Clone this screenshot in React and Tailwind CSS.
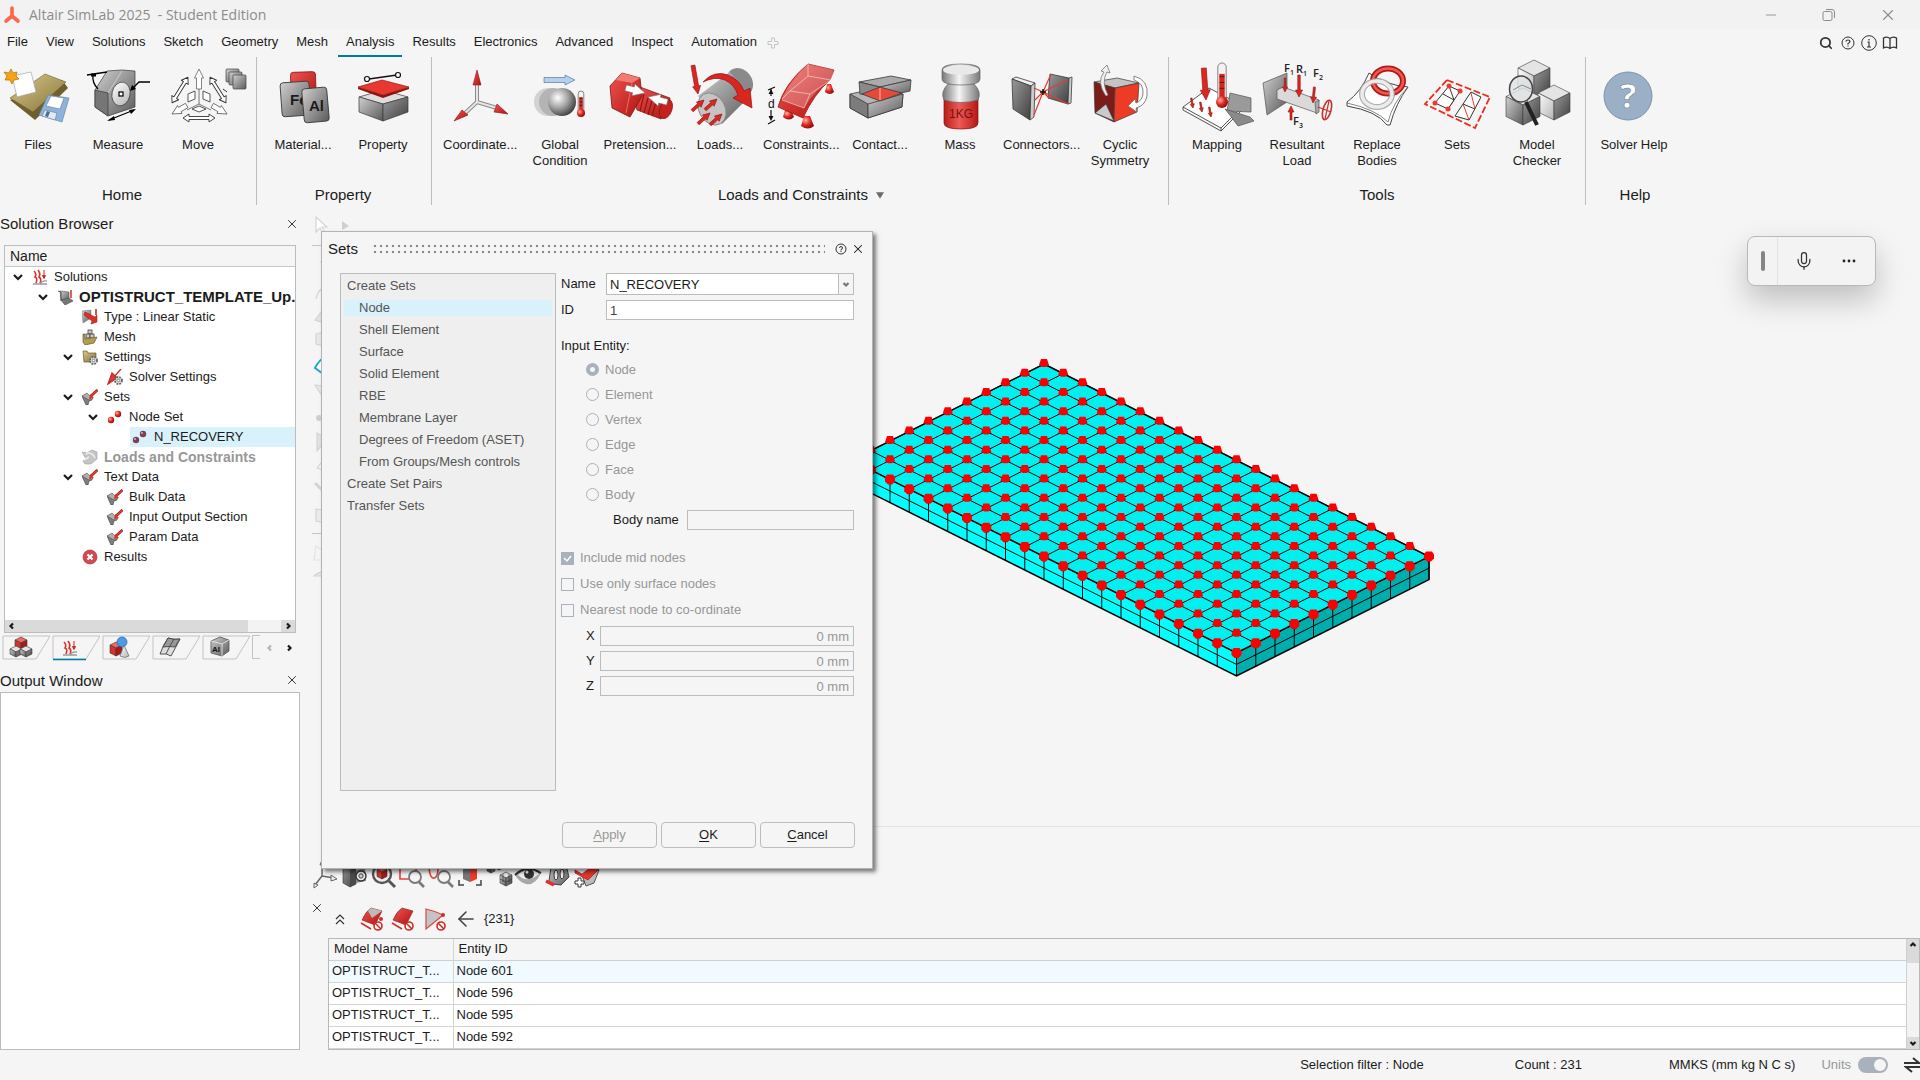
import React from "react";
import { X, Mic, Minus, BookOpen, Search, ArrowLeft } from "lucide-react";

const OUT = "#3a3a3a";

function Defs() {
  return (
    <svg className="absolute h-0 w-0" aria-hidden="true">
      <defs>
        <linearGradient id="gray" x1="0" y1="0" x2="1" y2="1">
          <stop offset="0" stopColor="#d0d0d0" />
          <stop offset="1" stopColor="#5a5a5a" />
        </linearGradient>
        <linearGradient id="light" x1="0" y1="0" x2="1" y2="1">
          <stop offset="0" stopColor="#ffffff" />
          <stop offset="1" stopColor="#b4b4b4" />
        </linearGradient>
        <linearGradient id="dark" x1="0" y1="0" x2="1" y2="1">
          <stop offset="0" stopColor="#9a9a9a" />
          <stop offset="1" stopColor="#404040" />
        </linearGradient>
        <linearGradient id="red" x1="0" y1="0" x2="1" y2="1">
          <stop offset="0" stopColor="#f05450" />
          <stop offset="1" stopColor="#b01410" />
        </linearGradient>
        <linearGradient id="bar" x1="0" y1="0" x2="1" y2="0">
          <stop offset="0" stopColor="#777" />
          <stop offset="0.45" stopColor="#f6f6f6" />
          <stop offset="1" stopColor="#777" />
        </linearGradient>
        <linearGradient id="redbar" x1="0" y1="0" x2="1" y2="0">
          <stop offset="0" stopColor="#b81d19" />
          <stop offset="0.45" stopColor="#ee5a56" />
          <stop offset="1" stopColor="#b51814" />
        </linearGradient>
        <linearGradient id="tan" x1="0" y1="0" x2="1" y2="1">
          <stop offset="0" stopColor="#d9c98d" />
          <stop offset="1" stopColor="#857237" />
        </linearGradient>
        <radialGradient id="ball" cx="0.35" cy="0.35" r="0.75">
          <stop offset="0" stopColor="#ffffff" />
          <stop offset="0.5" stopColor="#a0a0a0" />
          <stop offset="1" stopColor="#303030" />
        </radialGradient>
        <radialGradient id="redball" cx="0.35" cy="0.35" r="0.75">
          <stop offset="0" stopColor="#ffb0a8" />
          <stop offset="0.5" stopColor="#e0261f" />
          <stop offset="1" stopColor="#7c0b08" />
        </radialGradient>
      </defs>
    </svg>
  );
}

/* Isometric cube: x,y is the top vertex, s the half width, h the side height. */
function Cube({ x, y, s, h, top = "#e4e4e4", left = "url(#gray)", right = "url(#dark)" }) {
  const k = s / 2;
  return (
    <g stroke={OUT} strokeWidth="0.6" strokeLinejoin="round">
      <polygon points={`${x},${y} ${x + s},${y + k} ${x},${y + 2 * k} ${x - s},${y + k}`} fill={top} />
      <polygon points={`${x - s},${y + k} ${x},${y + 2 * k} ${x},${y + 2 * k + h} ${x - s},${y + k + h}`} fill={left} />
      <polygon points={`${x + s},${y + k} ${x},${y + 2 * k} ${x},${y + 2 * k + h} ${x + s},${y + k + h}`} fill={right} />
    </g>
  );
}

/* Solid arrow whose tip is at x,y and whose tail is l units back along angle a. */
function Arrow({ x, y, a, l = 14, w = 2, head = 3, fill = "#dc2620", stroke = "#8d1410" }) {
  const t = head * 2;
  return (
    <polygon
      transform={`translate(${x} ${y}) rotate(${a})`}
      points={`0,0 ${-t},${-head} ${-t},${-w / 2} ${-l},${-w / 2} ${-l},${w / 2} ${-t},${w / 2} ${-t},${head}`}
      fill={fill}
      stroke={stroke}
      strokeWidth="0.6"
      strokeLinejoin="round"
    />
  );
}

function DoubleArrow({ x, y, a, l }) {
  const h = l / 2;
  return (
    <polygon
      transform={`translate(${x} ${y}) rotate(${a})`}
      points={`${h},0 ${h - 6},-4 ${h - 6},-1.5 ${6 - h},-1.5 ${6 - h},-4 ${-h},0 ${6 - h},4 ${6 - h},1.5 ${h - 6},1.5 ${h - 6},4`}
      fill="#fff"
      stroke="#333"
      strokeWidth="0.9"
      strokeLinejoin="round"
    />
  );
}

function Thermo({ x, y1, y2, r = 3.5 }) {
  return (
    <g>
      <rect x={x - r * 0.7} y={y1} width={r * 1.4} height={y2 - y1} rx={r * 0.7} fill="#f2f2f2" stroke="#555" strokeWidth="0.7" />
      <rect x={x - r * 0.45} y={y1 + (y2 - y1) * 0.28} width={r * 0.9} height={(y2 - y1) * 0.7} fill="#d9231d" />
      <circle cx={x} cy={y2} r={r} fill="url(#redball)" />
      {[0.35, 0.5, 0.65].map((k) => (
        <path key={k} d={`M${x - r * 0.4} ${y1 + (y2 - y1) * k}h${r * 0.8}`} stroke="#222" strokeWidth="0.8" />
      ))}
    </g>
  );
}

const icons = {
  files: (
    <>
      <polygon points="8,40 33,60 66,28 60,20" fill="#6f5f2e" />
      <polygon points="43,14 64,22 31,52 8,38" fill="url(#tan)" stroke="#6d5f30" strokeWidth="0.6" />
      <g stroke="#5d7ba1" strokeWidth="0.6">
        <polygon points="46,35 67,38 60,62 37,55" fill="#8fb2da" />
        <polygon points="49,36 62,38 58,49 44,46" fill="#fff" />
        <polygon points="43,50 55,53 53,60 40,56" fill="#e3e9f0" />
      </g>
      <polygon points="45,51 48,52 46,57 43,56" fill="#4a6b96" />
      <polygon points="10,16 29,12 34,32 15,37" fill="#fff" stroke="#a5a5a5" strokeWidth="0.7" />
      <polygon points="9,9 11,13 15,12 14,16 17,19 12,20 10,24 8,20 3,20 5,16 2,12 7,13" fill="#f6a414" stroke="#b36f00" strokeWidth="0.7" />
    </>
  ),
  measure: (
    <>
      <g stroke={OUT} strokeWidth="0.7">
        <polygon points="25,11 40,10 53,11 53,47 26,56 13,47 13,30" fill="url(#gray)" />
        <polygon points="13,30 26,33 26,56 13,47" fill="#767676" />
        <path d="M26 33L40 11" fill="none" stroke="#ddd" />
        <ellipse cx="39" cy="34" rx="9" ry="12" fill="url(#light)" transform="rotate(12 39 34)" />
      </g>
      <rect x="37" y="32" width="4" height="4" fill="#fff" stroke="#000" strokeWidth="1.2" />
      <g stroke="#000" strokeWidth="1.3" fill="none">
        <path d="M5 15l20-3M11 15q-1 8 5 14M68 22H57l-7 7M27 60l25-10" />
        <path d="M9 15h5" strokeWidth="3" />
      </g>
      <path d="M48 31l2-6 4 4zM25 61l7-5 1 4zM54 49l-7 1 2 4z" fill="#000" />
    </>
  ),
  move: (
    <>
      <DoubleArrow x={18} y={30} a={-58} l={30} />
      <DoubleArrow x={56} y={30} a={58} l={30} />
      <DoubleArrow x={37} y={58} a={0} l={32} />
      <Arrow x={37} y={9} a={-90} l={20} w={5} head={4.5} fill="#fff" stroke="#333" />
      <Arrow x={10} y={54} a={150} l={17} w={5} head={4.5} fill="#fff" stroke="#333" />
      <Arrow x={65} y={54} a={30} l={17} w={5} head={4.5} fill="#fff" stroke="#333" />
      <g fill="#fff" stroke="#444" strokeWidth="0.9">
        <polygon points="26,34 33,31 33,39 26,42" />
        <polygon points="48,34 41,31 41,39 48,42" />
        <polygon points="37,46 44,49 37,52 30,49" />
      </g>
      <path d="M37 29v15l-12 6M37 44l12 6" stroke="#555" fill="none" strokeWidth="0.8" />
      <g stroke="#444" strokeWidth="0.7" fill="url(#gray)">
        <rect x="64" y="9" width="13" height="13" rx="1" />
        <rect x="67" y="12" width="13" height="13" rx="1" />
        <rect x="71" y="15" width="13" height="14" rx="1" />
      </g>
      <path d="M61 29l4 3" stroke="#333" />
    </>
  ),
  material: (
    <>
      <rect x="24" y="12" width="25" height="34" rx="3" fill="url(#red)" stroke="#7c1411" strokeWidth="0.8" transform="rotate(-2 36 30)" />
      <rect x="14" y="22" width="29" height="34" rx="3" fill="url(#gray)" stroke={OUT} strokeWidth="0.9" transform="rotate(-4 28 38)" />
      <text x="23" y="45" fontSize="15" fontWeight="700" fontFamily="Liberation Sans, sans-serif" fill="#1c1c1c">Fe</text>
      <rect x="36" y="28" width="25" height="34" rx="3" fill="url(#gray)" stroke={OUT} strokeWidth="0.9" transform="rotate(-5 48 45)" />
      <text x="42" y="51" fontSize="15" fontWeight="700" fontFamily="Liberation Sans, sans-serif" fill="#1c1c1c">Al</text>
    </>
  ),
  property: (
    <>
      <g stroke={OUT} strokeWidth="0.7" strokeLinejoin="round">
        <polygon points="12,37 36,30 61,37 36,44" fill="#dedede" />
        <polygon points="12,37 36,44 36,61 12,52" fill="url(#gray)" />
        <polygon points="61,37 36,44 36,61 61,52" fill="url(#dark)" />
      </g>
      <polygon points="11,27 36,35 62,27 62,29 36,38 11,29" fill="#8f1410" />
      <polygon points="11,27 35,20 62,27 36,35" fill="#e8382f" stroke="#9b1a15" strokeWidth="0.7" />
      <path d="M22 19l28-4" stroke="#111" strokeWidth="1.3" />
      <circle cx="20" cy="19" r="2.5" fill="#fff" stroke="#111" strokeWidth="1.2" />
      <circle cx="51" cy="15" r="2.5" fill="#fff" stroke="#111" strokeWidth="1.2" />
    </>
  ),
  coordinate: (
    <>
      <g stroke="#8a8a8a" strokeWidth="4">
        <path d="M33 42V25M33 42L18 56M33 42l20 6" />
      </g>
      <g stroke="#e6e6e6" strokeWidth="2">
        <path d="M33 42V25M33 42L18 56M33 42l20 6" />
      </g>
      <g fill="url(#red)" stroke="#8d1410" strokeWidth="0.6">
        <polygon points="33,10 37,25 29,25" />
        <polygon points="10,61 18,50 24,55" />
        <polygon points="64,54 50,52 53,44" />
      </g>
    </>
  ),
  global: (
    <>
      <Arrow x={51} y={20} a={0} l={31} w={5} head={5} fill="#b4d0ee" stroke="#44688f" />
      <circle cx="24" cy="42" r="14" fill="#d2d2d2" />
      <circle cx="29" cy="42" r="14" fill="#b4b4b4" />
      <circle cx="38" cy="42" r="14" fill="url(#ball)" />
      <Thermo x={57} y1={31} y2={53} r={4} />
    </>
  ),
  pretension: (
    <>
      <polygon points="27,27 36,27 66,38 65,52 57,59 33,50" fill="url(#red)" stroke="#7e1411" strokeWidth="0.7" />
      <g stroke="#8a1512" strokeWidth="1.1">
        <path d="M40 34l-4 17M44 38l-4 15M48 40l-4 15M52 42l-4 14" />
      </g>
      <ellipse cx="62" cy="49" rx="6" ry="10" transform="rotate(20 62 49)" fill="#c5221d" stroke="#7e1411" strokeWidth="0.6" />
      <polygon points="18,13 36,18 38,36 26,57 8,48 6,26" fill="url(#red)" stroke="#7e1411" strokeWidth="0.8" />
      <polygon points="18,13 36,18 28,23 12,20" fill="#f27b76" />
      <path d="M28 23l-6 30" stroke="#f27b76" strokeWidth="0.8" />
      <Arrow x={41} y={33} a={15} l={20} w={6} head={6} fill="#fff" stroke="#777" />
      <Arrow x={44} y={37} a={195} l={20} w={6} head={6} fill="#fff" stroke="#777" />
    </>
  ),
  loads: (
    <>
      <ellipse cx="56" cy="22" rx="12" ry="15" transform="rotate(-35 56 22)" fill="#8a8a8a" />
      <polygon points="14,36 46,12 66,36 38,64" fill="url(#gray)" />
      <ellipse cx="28" cy="49" rx="13" ry="17" transform="rotate(-30 28 49)" fill="#c4c4c4" stroke="#808080" strokeWidth="0.8" />
      <path d="M19 22Q30 10 44 15Q56 20 60 31L66 28L68 48L49 38L54 35Q50 24 41 20Q31 16 19 22z" fill="#d9261f" stroke="#8d1410" strokeWidth="0.7" />
      <Arrow x={14} y={34} a={80} l={29} w={4} head={4} />
      <Arrow x={20} y={40} a={-42} l={16} w={3} head={3.5} />
      <Arrow x={33} y={39} a={-42} l={16} w={3} head={3.5} />
      <Arrow x={26} y={53} a={-42} l={16} w={3} head={3.5} />
      <Arrow x={38} y={54} a={-42} l={16} w={3} head={3.5} />
    </>
  ),
  constraints: (
    <>
      <g fill="url(#redball)">
        <path d="M21 50h6l3 7q-5 5-11 0z" />
        <path d="M40 56h6l4 10q-6 5-13 0z" />
        <path d="M63 24h4l3 8q-4 4-9 0z" />
      </g>
      <path d="M14 47Q20 24 44 4l26 6-4 10Q50 34 39 58z" fill="url(#red)" stroke="#a01813" strokeWidth="0.8" />
      <path d="M18 38Q28 18 44 4l26 6-3 10Q52 28 40 48L18 40z" fill="#fff" fillOpacity="0.25" />
      <path d="M44 4v12l23 4M44 16L26 31l-8 8M26 31l20 3 21-14M46 34l-6 14-22-8" stroke="#fff" strokeOpacity="0.6" fill="none" strokeWidth="0.8" />
      <path d="M4 30l7-3M4 64l7-4M7 29v7M7 50v9" stroke="#111" strokeWidth="1.2" />
      <path d="M4.500 34l2.500-5 2.500 5zM4.500 56l2.500 5 2.500-5z" fill="#111" />
      <text x="4" y="48" fontSize="12" fontFamily="Liberation Sans, sans-serif" fill="#111">d</text>
    </>
  ),
  contact: (
    <>
      <g stroke={OUT} strokeWidth="0.8" strokeLinejoin="round">
        <polygon points="6,34 20,31 59,34 58,47 24,58 6,48" fill="#b5b5b5" />
        <polygon points="6,34 24,44 24,58 6,48" fill="#7c7c7c" />
        <polygon points="24,44 59,34 58,47 24,58" fill="url(#gray)" />
        <polygon points="15,22 47,16 67,20 36,27" fill="#aaaaaa" />
        <polygon points="15,22 36,27 36,36 16,34" fill="#8a8a8a" />
        <polygon points="36,27 67,20 66,31 44,36 36,34" fill="url(#gray)" />
        <polygon points="18,34 36,27 58,33 36,41" fill="#e34a38" />
      </g>
      <path d="M36 28v12" stroke="#ffb6a6" />
    </>
  ),
  mass: (
    <>
      <path d="M20 38h34v25q0 6-17 6t-17-6z" fill="url(#redbar)" stroke="#7e1411" strokeWidth="0.7" />
      <path d="M24 24h26q8 8 4 16-17 5-34 0-4-8 4-16z" fill="url(#bar)" stroke="#666" strokeWidth="0.7" />
      <path d="M18 10q0-6 19-6t19 6v9q0 6-19 6t-19-6z" fill="url(#bar)" stroke="#666" strokeWidth="0.7" />
      <ellipse cx="37" cy="10" rx="18" ry="5" fill="#e9e9e9" />
      <text x="25" y="58" fontSize="12" fontFamily="Liberation Sans, sans-serif" fill="#7b0f0c">1KG</text>
    </>
  ),
  connectors: (
    <>
      <g stroke={OUT} strokeWidth="0.8">
        <polygon points="8,19 12,17 31,23 27,26" fill="#eee" />
        <polygon points="8,19 27,26 26,60 9,49" fill="url(#dark)" />
        <polygon points="27,26 31,23 30,57 26,60" fill="#ccc" />
        <polygon points="46,14 65,18 64,44 44,38" fill="url(#dark)" />
        <polygon points="65,18 68,17 67,43 64,44" fill="#ccc" />
      </g>
      <path d="M30 28l9 4-9 23M31 40l8-8 8-18M39 32l24-12M39 32l6 6M39 32l25 12" stroke="#e8392f" strokeWidth="1.2" fill="none" />
      <path d="M36 32h6M39 29v6" stroke="#111" strokeWidth="1.5" />
    </>
  ),
  cyclic: (
    <>
      <g stroke={OUT} strokeWidth="0.7">
        <polygon points="10,22 33,18 55,23 31,28" fill="#c4c4c4" />
        <polygon points="10,22 31,28 30,62 11,53" fill="#7a1c18" />
        <polygon points="55,23 31,28 30,62 53,52" fill="#ee3b26" />
        <polygon points="11,53 22,44 30,61" fill="#c9c9c9" />
      </g>
      <path d="M22 36Q12 22 20 12l-3-1 6-6 3 8-3-1Q17 22 24 35z" fill="#efefef" stroke="#777" strokeWidth="0.8" />
      <path d="M50 16q15 4 13 20-2 10-11 12l1 4-9-6 7-7 1 4q6-2 7-9 1-11-9-14z" fill="#fff" stroke="#777" strokeWidth="0.9" />
    </>
  ),
  mapping: (
    <>
      <polygon points="2,47 28,28 62,46 40,68" fill="#fff" stroke="#444" strokeWidth="0.9" />
      <path d="M2 47v3l38 21v-3M40 71l22-22" fill="none" stroke="#444" strokeWidth="0.9" />
      <g stroke="#555" strokeWidth="0.7">
        <polygon points="49,33 70,38 70,52 46,51" fill="#9a9a9a" />
        <polygon points="44,49 69,57 73,61 57,66 48,54" fill="#8a8a8a" />
      </g>
      <Arrow x={25} y={40} a={86} l={32} w={5} head={5} />
      <Arrow x={12} y={48} a={80} l={10} w={1.5} head={2} />
      <Arrow x={21} y={52} a={80} l={10} w={1.5} head={2} />
      <Arrow x={30} y={57} a={80} l={10} w={1.5} head={2} />
      <Thermo x={41} y1={3} y2={42} r={6} />
    </>
  ),
  resultant: (
    <>
      <g stroke="#555" strokeWidth="0.7">
        <polygon points="2,23 26,13 26,42 6,55" fill="url(#gray)" />
        <polygon points="16,30 22,27 58,40 56,53 16,39" fill="#dadada" />
        <polygon points="54,42 58,40 58,52 55,54" fill="#a9a9a9" />
      </g>
      <Arrow x={24} y={32} a={90} l={14} w={1.5} head={2.5} />
      <Arrow x={38} y={37} a={90} l={22} w={2.5} head={3.5} />
      <Arrow x={52} y={43} a={95} l={16} w={2} head={3} />
      <Arrow x={30} y={46} a={-90} l={14} w={2} head={3} />
      <ellipse cx="66" cy="50" rx="4" ry="10" transform="rotate(15 66 50)" fill="none" stroke="#c8302b" strokeWidth="1.6" />
      <path d="M57 47l13 5M68 41l-4 18" stroke="#c8302b" strokeWidth="1.2" />
      <g fontFamily="Open Sans, sans-serif" fontSize="11" fontWeight="600" fill="#222">
        <text x="23" y="12">F<tspan fontSize="7" dy="3">1</tspan></text>
        <text x="35" y="13">R<tspan fontSize="7" dy="3">1</tspan></text>
        <text x="52" y="17">F<tspan fontSize="7" dy="3">2</tspan></text>
        <text x="32" y="65">F<tspan fontSize="7" dy="3">3</tspan></text>
      </g>
    </>
  ),
  replace: (
    <>
      <path d="M28 13q16 12 39 14-12 16-18 38l-3 0q-10-14-40-19l0-4q14-10 22-29z" fill="#fff" stroke="#444" strokeWidth="1" />
      <path d="M6 43q28 6 41 19 5-20 20-35" fill="none" stroke="#666" strokeWidth="0.8" />
      <ellipse cx="47" cy="21" rx="15" ry="12.500" fill="none" stroke="#b61a16" strokeWidth="6" />
      <ellipse cx="47" cy="21" rx="15" ry="12.500" fill="none" stroke="#ee5a54" strokeWidth="2.500" />
      <ellipse cx="36" cy="34" rx="15" ry="13" fill="none" stroke="#9c9c9c" strokeWidth="6" strokeOpacity="0.8" />
      <ellipse cx="36" cy="34" rx="15" ry="13" fill="none" stroke="#f3f3f3" strokeWidth="3.500" strokeOpacity="0.9" />
    </>
  ),
  sets: (
    <>
      <polygon points="26,20 69,37 54,68 4,44" fill="none" stroke="#ef2b20" strokeWidth="1.8" strokeDasharray="7 2.500" />
      <g fill="#fff" stroke="#333" strokeWidth="1">
        <polygon points="28,26 39,31 27,49 14,43" />
        <polygon points="50,32 60,37 48,60 34,56" />
        <path d="M22 34l11 6M28 26l5 14-6 9M42 44l12 5" />
      </g>
      <path d="M50 33l4 16M42 44l6 16" stroke="#e63a30" />
      <g fill="#ee3a2e">
        <circle cx="28" cy="26" r="2.500" />
        <circle cx="39" cy="31" r="2.500" />
        <circle cx="27" cy="49" r="2.500" />
        <circle cx="14" cy="43" r="2.500" />
      </g>
    </>
  ),
  checker: (
    <>
      <Cube x={33} y={0} s={16} h={20} left="url(#light)" />
      <Cube x={53} y={25} s={16} h={19} left="url(#light)" />
      <Cube x={22} y={28} s={17} h={20} left="url(#gray)" />
      <ellipse cx="20" cy="29" rx="11.500" ry="13" fill="#dfe3e5" fillOpacity="0.8" stroke="#444" strokeWidth="1.5" />
      <path d="M12 30l9-5 9 4" stroke="#888" fill="none" />
      <path d="M25 42l11 23" stroke="#222" strokeWidth="4" />
    </>
  ),
  help: (
    <>
      <circle cx="30" cy="36" r="24" fill="#9bb0c6" stroke="#7b94ae" strokeWidth="1" />
      <text x="30" y="48" textAnchor="middle" fontSize="34" fontWeight="700" fontFamily="Open Sans, sans-serif" fill="#fff" stroke="#5d7186" strokeWidth="0.5">?</text>
    </>
  ),
};

const groups = [
  { name: "Home", cls: "w-[257px]", row: "-ml-0.5", head: "pr-3", items: [["files", "Files"], ["measure", "Measure"], ["move", "Move"]] },
  { name: "Property", cls: "w-[175px]", row: "ml-1.5", head: "pr-0.5", items: [["material", "Material..."], ["property", "Property"]] },
  {
    name: "Loads and Constraints",
    cls: "w-[737px]",
    row: "ml-2",
    head: "pl-0.5",
    menu: true,
    items: [
      ["coordinate", "Coordinate..."], ["global", "Global Condition"], ["pretension", "Pretension..."],
      ["loads", "Loads..."], ["constraints", "Constraints..."], ["contact", "Contact..."],
      ["mass", "Mass"], ["connectors", "Connectors..."], ["cyclic", "Cyclic Symmetry"],
    ],
  },
  {
    name: "Tools",
    cls: "w-[417px]",
    row: "ml-2",
    items: [["mapping", "Mapping"], ["resultant", "Resultant Load"], ["replace", "Replace Bodies"], ["sets", "Sets"], ["checker", "Model Checker"]],
  },
  { name: "Help", cls: "w-[98px]", row: "ml-2", last: true, items: [["help", "Solver Help"]] },
];

function Ribbon() {
  return (
    <div className="flex h-[148px] shrink-0">
      {groups.map((g) => (
        <section key={g.name} aria-label={g.name} className={`flex shrink-0 flex-col ${g.cls} ${g.last ? "" : "border-r border-[#bdbdbd]"}`}>
          <div className={`flex flex-1 pt-[3px] ${g.row}`}>
            {g.items.map(([id, label]) => (
              <button key={id} type="button" className="flex w-20 shrink-0 flex-col items-center">
                <svg className="h-[72px] w-[72px] shrink-0 overflow-visible" viewBox="0 0 72 72" aria-hidden="true">{icons[id]}</svg>
                <span className="mt-[5px] w-[74px] text-center leading-4">{label}</span>
              </button>
            ))}
          </div>
          <h2 className={`flex h-5 items-center justify-center gap-2 text-[15px] ${g.head || ""}`}>
            {g.name}
            {g.menu && <svg className="h-[7px] w-2" viewBox="0 0 10 8" aria-hidden="true"><path d="M0 0h10L5 8z" fill="#6b6b6b" /></svg>}
          </h2>
        </section>
      ))}
    </div>
  );
}

function Chevron({ className = "", small = false }) {
  return (
    <svg className={`h-3 w-3 ${className}`} viewBox="0 0 12 12" aria-hidden="true">
      <path d={small ? "M3.500 5l2.500 2.500L8.500 5" : "M2 4l4 4 4-4"} fill="none" stroke="currentColor" strokeWidth="2.200" />
    </svg>
  );
}

const Flame = (
  <>
    <path d="M2 2q3 3 1 6 3 1 1 6M6 1q3 4 1 7 3 2 1 6" fill="none" stroke="#e2312a" strokeWidth="1.600" />
    <path d="M12 1v7M10.500 6.500l1.500 3 1.500-3z" stroke="#d02721" fill="#d02721" />
    <path d="M1 15h7q2-4 7-3M8 15h7" fill="none" stroke="#9a9a9a" strokeWidth="1.300" />
  </>
);
const Funnel = (
  <>
    <path d="M0 7l6 1 4 3-3 1-1 4-2 0z" fill="#7d7d7d" stroke="#444" strokeWidth="0.600" />
    <path d="M0 7l5-3 6 6-4 1z" fill="#b0b0b0" stroke="#555" strokeWidth="0.600" />
    <path d="M15.500 1L9 7" stroke="#8d1410" strokeWidth="2.600" />
    <path d="M15.500 1L9 7" stroke="#e2443d" strokeWidth="1.400" />
    <path d="M8 5l4 4-5 1z" fill="#d9332c" />
  </>
);
const Gear = (
  <>
    <circle cx="11.500" cy="11.500" r="3.500" fill="#ddd" stroke="#666" strokeWidth="1.800" strokeDasharray="1.800 1" />
    <circle cx="11.500" cy="11.500" r="1.300" fill="#fff" stroke="#666" strokeWidth="0.700" />
  </>
);
const treeIcons = {
  solutions: Flame,
  model: (
    <>
      <polygon points="3,2 12,3 12,12 4,11" fill="url(#gray)" stroke="#555" strokeWidth="0.600" />
      <polygon points="4,11 12,9 16,12 8,16" fill="#777" stroke="#444" strokeWidth="0.600" />
      <path d="M1 2l3 1v9" fill="none" stroke="#555" />
      <path d="M14 1v8" stroke="#d12b25" strokeWidth="1.500" />
    </>
  ),
  type: (
    <>
      <polygon points="0,2 9,1 9,9 1,14" fill="url(#gray)" stroke="#777" strokeWidth="0.500" />
      <polygon points="3,3 13,8 15,6 15,13 9,15 10,12 2,6" fill="#dc2f28" stroke="#8d1410" strokeWidth="0.500" />
      <path d="M14 0v6" stroke="#b9211c" strokeWidth="1.500" />
    </>
  ),
  mesh: (
    <>
      <g fill="#c9c9c9" stroke="#444" strokeWidth="0.800">
        <rect x="6" y="1" width="4" height="4" />
        <rect x="4" y="5" width="4" height="4" />
        <rect x="8" y="5" width="4" height="4" />
      </g>
      <path d="M1 5l2 0v5l12-2-3 6-9 2-2-3z" fill="#b49c54" stroke="#6b5a25" strokeWidth="0.700" />
    </>
  ),
  settings: (
    <>
      <path d="M1 2h4l1 2h8v9H2z" fill="url(#tan)" stroke="#6b5a25" strokeWidth="0.700" />
      {Gear}
    </>
  ),
  solver: (
    <>
      <path d="M14 0L7 8M5 4l5 5-9 6z" stroke="#c92a24" fill="#dd3b34" strokeWidth="1.300" />
      {Gear}
    </>
  ),
  funnel: Funnel,
  nodes: (
    <>
      <circle cx="11" cy="5" r="3.200" fill="url(#redball)" />
      <circle cx="4" cy="11" r="3.200" fill="url(#redball)" />
    </>
  ),
  nodesel: (
    <>
      <circle cx="11" cy="5" r="3.200" fill="#7d3f58" />
      <circle cx="4" cy="11" r="3.200" fill="#7d3f58" />
      <circle cx="10" cy="4" r="1" fill="#d5b5c5" />
      <circle cx="3" cy="10" r="1" fill="#d5b5c5" />
    </>
  ),
  loads: (
    <>
      <path d="M0 3l5 1 5-3 5 2v7l-6 5-6 0-2-3 3-2z" fill="#c4c4c4" stroke="#a9a9a9" strokeWidth="0.700" />
      <path d="M4 5q6-3 9 4M2 11l5-3" fill="none" stroke="#eee" strokeWidth="1.500" />
    </>
  ),
  results: (
    <>
      <circle cx="8" cy="8" r="7" fill="#d04a50" stroke="#a8353b" strokeWidth="0.700" />
      <path d="M5.500 5.500l5 5M10.500 5.500l-5 5" stroke="#fff" strokeWidth="2.200" />
    </>
  ),
};

const tree = [
  { pad: "pl-[7px]", open: true, icon: "solutions", label: "Solutions" },
  { pad: "pl-8", open: true, icon: "model", label: "OPTISTRUCT_TEMPLATE_Up.", cls: "text-[15px] font-bold" },
  { pad: "pl-[57px]", icon: "type", label: "Type : Linear Static" },
  { pad: "pl-[57px]", icon: "mesh", label: "Mesh" },
  { pad: "pl-[57px]", open: true, icon: "settings", label: "Settings" },
  { pad: "pl-[82px]", icon: "solver", label: "Solver Settings" },
  { pad: "pl-[57px]", open: true, icon: "funnel", label: "Sets" },
  { pad: "pl-[82px]", open: true, icon: "nodes", label: "Node Set" },
  { pad: "pl-[107px]", icon: "nodesel", label: "N_RECOVERY", sel: true },
  { pad: "pl-[57px]", icon: "loads", label: "Loads and Constraints", cls: "text-[14px] font-bold text-[#979797]" },
  { pad: "pl-[57px]", open: true, icon: "funnel", label: "Text Data" },
  { pad: "pl-[82px]", icon: "funnel", label: "Bulk Data" },
  { pad: "pl-[82px]", icon: "funnel", label: "Input Output Section" },
  { pad: "pl-[82px]", icon: "funnel", label: "Param Data" },
  { pad: "pl-[57px]", icon: "results", label: "Results" },
];

const tabIcons = [
  <g key="a">
    <Cube x={12} y={1} s={6} h={6} top="#f06a64" left="#d8302a" right="#a81a15" />
    <Cube x={7} y={10} s={6} h={5} />
    <Cube x={17} y={10} s={6} h={5} />
  </g>,
  <g key="b" transform="translate(3 4)">{Flame}</g>,
  <g key="c">
    <Cube x={7} y={6} s={6} h={8} top="#f06a64" left="#d8302a" right="#a81a15" />
    <circle cx="13" cy="6" r="5" fill="#4a9be8" stroke="#2463a5" strokeWidth="0.700" />
    <path d="M15 9l5 11q-4 3-9 0z" fill="url(#light)" stroke="#666" strokeWidth="0.700" />
  </g>,
  <g key="d" fill="#ddd" stroke="#444" strokeWidth="0.900">
    <path d="M9 2q6 2 12 1Q17 11 12 20 8 17 1 18 4 9 9 2z" />
    <path d="M9 2q6 2 12 1-3 4-5 8-6-1-12 0z" fill="#999" />
    <path d="M15 3q-5 8-8 15" fill="none" />
  </g>,
  <g key="e">
    <polygon points="2,5 11,1 20,4 20,15 13,20 2,17" fill="url(#gray)" stroke="#555" strokeWidth="0.800" />
    <path d="M2 5l11 3 7-4M13 8v12" fill="none" stroke="#eee" strokeWidth="0.800" />
    <text x="3" y="16" fontSize="8" fontWeight="700" fontFamily="Liberation Sans, sans-serif" fill="#111">Al</text>
  </g>,
];

function Sidebar() {
  return (
    <aside className="flex w-[300px] shrink-0 flex-col">
      <header className="flex h-10 shrink-0 items-center justify-between pb-0.5 pr-px">
        <h2 className="text-[15px]">Solution Browser</h2>
        <button type="button" aria-label="Close Solution Browser"><X className="h-3.5 w-3.5" strokeWidth={1.5} /></button>
      </header>
      <div className="mx-1 flex h-[388px] shrink-0 flex-col border border-[#bcbcbc] bg-white">
        <div className="flex h-[21px] shrink-0 items-center border-b border-[#c8c8c8] bg-[#f5f5f5] pl-[5px] text-[14px]">Name</div>
        <ul className="flex-1 overflow-hidden">
          {tree.map((r, i) => (
            <li key={i} className={`flex h-5 items-center whitespace-nowrap ${r.pad}`}>
              {r.open ? (
                <button type="button" aria-label={`Collapse ${r.label}`} className="mr-3 h-3 w-3"><Chevron className="block" /></button>
              ) : (
                <span className="w-6 shrink-0" />
              )}
              <span className={`-ml-1.5 flex h-5 min-w-0 grow items-center gap-1.5 pl-0.5 ${r.sel ? "bg-[#d8f1fb]" : ""}`}>
                <svg className="h-4 w-4 shrink-0" viewBox="0 0 16 16" aria-hidden="true">{treeIcons[r.icon]}</svg>
                <span className={r.cls}>{r.label}</span>
              </span>
            </li>
          ))}
        </ul>
        <div className="flex h-3 shrink-0 items-center bg-[#f3f3f3]">
          <button type="button" aria-label="Scroll left" className="flex h-3 w-3.5 items-center justify-center bg-[#dadada]"><Chevron small className="rotate-90" /></button>
          <div className="h-3 w-[229px] bg-[#dadada]" />
          <div className="grow" />
          <button type="button" aria-label="Scroll right" className="flex h-3 w-3.5 items-center justify-center bg-[#dadada]"><Chevron small className="-rotate-90" /></button>
        </div>
      </div>
      <div className="mt-0.5 flex h-[26px] shrink-0 pl-0.5" role="tablist">
        {tabIcons.map((ic, i) => (
          <button key={i} type="button" role="tab" aria-selected={i === 1} aria-label={`Browser tab ${i + 1}`} className="h-[26px] w-[50px] shrink-0">
            <svg className="h-[26px] w-[50px] overflow-visible" viewBox="0 0 50 26">
              <path d="M48 1H1v23h33L48 1" fill="none" stroke="#c3c3c3" />
              {i === 1 && <path d="M1 24.500h33" stroke="#007aa3" strokeWidth="1.500" />}
              <g transform="translate(7 1)">{ic}</g>
            </svg>
          </button>
        ))}
        <span className="h-6 w-2 border-b border-l border-t border-[#c3c3c3]" />
        <button type="button" aria-label="Previous tabs" className="ml-1 text-[#b5b5b5]"><Chevron small className="rotate-90" /></button>
        <button type="button" aria-label="Next tabs" className="ml-[7px]"><Chevron small className="-rotate-90" /></button>
      </div>
      <header className="flex h-[31px] shrink-0 items-end justify-between pb-[3px] pr-px">
        <h2 className="text-[15px] leading-4">Output Window</h2>
        <button type="button" aria-label="Close Output Window" className="pb-0.5"><X className="h-3.5 w-3.5" strokeWidth={1.5} /></button>
      </header>
      <div className="grow border border-[#bcbcbc] bg-white" />
    </aside>
  );
}

/* Plate of 20 x 10 elements, two layers thick, in an isometric view. */
function Model() {
  const P = (i, j) => [1044 + 19.25 * (i - j), 364 + 9.63 * (i + j)];
  const H = 23;
  const str = (pts) => pts.map((p) => p.join(",")).join(" ");
  const dn = ([x, y], d) => [x, y + d];
  const A = P(0, 0), B = P(20, 0), C = P(20, 10), D = P(0, 10);
  const line = (a, b, key, w = 1) => <path key={key} d={`M${a[0]} ${a[1]}L${b[0]} ${b[1]}`} strokeWidth={w} />;
  const grid = [];
  for (let i = 0; i <= 20; i++) {
    grid.push(line(P(i, 0), P(i, 10), `a${i}`));
    grid.push(line(P(i, 10), dn(P(i, 10), H), `b${i}`));
  }
  for (let j = 0; j <= 10; j++) {
    grid.push(line(P(0, j), P(20, j), `c${j}`));
    grid.push(line(P(20, j), dn(P(20, j), H), `d${j}`));
  }
  const nodes = [];
  for (let i = 0; i <= 20; i++) {
    for (let j = 0; j <= 10; j++) {
      const [x, y] = P(i, j);
      const front = i === 20 || j === 10;
      const pts = front ? "-5,-2 -3,-5 3,-5 5,-2 5,2 2,5 -2,5 -5,2" : "-5,1 -3,-5 3,-5 5,1 2,3 -2,3";
      nodes.push(<polygon key={`${i}-${j}`} transform={`translate(${x} ${y})`} points={pts} />);
    }
  }
  return (
    <svg className="absolute left-[540px] top-[145px] h-[340px] w-[610px]" viewBox="840 350 610 340" role="img" aria-label="Finite element model">
      <polygon points={str([A, B, C, D])} fill="#00efef" />
      <polygon points={str([D, C, dn(C, H), dn(D, H)])} fill="#00ffff" />
      <polygon points={str([B, C, dn(C, H), dn(B, H)])} fill="#00adad" />
      <g stroke="#000" fill="none">
        {grid}
        {line(dn(D, H / 2), dn(C, H / 2), "m1")}
        {line(dn(B, H / 2), dn(C, H / 2), "m2")}
        <polygon points={str([A, B, C, D])} strokeWidth="1.500" />
        <polyline points={str([D, dn(D, H), dn(C, H), dn(B, H), B])} strokeWidth="1.500" />
      </g>
      <g fill="#fb0000">{nodes}</g>
    </svg>
  );
}

function Rail() {
  const g = { fill: "none", stroke: "#d4d4d4", strokeWidth: 1.2 };
  const shapes = [
    <path key="0" d="M12 8q8 0 12 8" {...g} />,
    <path key="1" d="M8 20q2-12 16-16" {...g} />,
    <path key="2" d="M7 16L16 4l8 4-6 12z" {...g} fill="#e2e2e2" />,
    <path key="3" d="M8 5l10-3v16l-10-3z" {...g} fill="#e8e8e8" />,
    <path key="4" d="M7 14Q11 6 18 2l8 6-8 14z" fill="#fff" stroke="#1aa5d8" strokeWidth="2" />,
    <path key="5" d="M7 6l16 2-7 12z" {...g} fill="#e8e8e8" />,
    <circle key="6" cx="11" cy="14" r="3" fill="#cfcfcf" />,
    <path key="7" d="M9 4l10 6-10 12z" {...g} fill="#e2e2e2" />,
    <path key="8" d="M9 14l8-10 6 14z" {...g} />,
    <path key="9" d="M7 4l14 14" {...g} strokeWidth="3" />,
    <path key="10" d="M8 5l14 2v13l-14-3z" {...g} fill="#ececec" />,
  ];
  return (
    <div className="flex w-[34px] flex-col pl-1 text-[#cfcfcf]" aria-hidden="true">
      <svg className="mt-2 h-6 w-12" viewBox="0 0 48 24">
        <path d="M12 4v15l4-4 3 6 2-1-3-6h5z" {...g} fill="#fff" />
        <path d="M38 8l7 5-7 4z" fill="#cfcfcf" />
      </svg>
      <div className="my-2 ml-2 border-t border-[#c5c5c5]" />
      {shapes.map((s, i) => (
        <svg key={i} className="mb-0.5 ml-1 h-[23px] w-[26px]" viewBox="0 0 26 23">{s}</svg>
      ))}
      <div className="mb-2 mt-1 ml-2 border-t border-[#c5c5c5]" />
      <svg className="ml-1 h-6 w-[26px]" viewBox="0 0 26 24"><path d="M8 4l6 4 8-2-2 12H6z" {...g} strokeOpacity="0.5" /></svg>
      <svg className="ml-1 h-6 w-[26px]" viewBox="0 0 26 24"><path d="M6 10q8-8 16 0z" {...g} fill="#e6e6e6" /></svg>
    </div>
  );
}

const Lens = <g><circle cx="17" cy="16" r="6" fill="#f5f5f5" stroke="#7a7a7a" strokeWidth="1.800" /><path d="M21 21l5 5" stroke="#7a7a7a" strokeWidth="2.600" /></g>;
const navIcons = [
  ["Triad", <g key="a" stroke="#666" fill="none"><path d="M11 15V2M11 15l-7 9M11 15l12 2" strokeWidth="1.500" /><path d="M3 22l0 5 4-3zM20 14l6 4-6 2zM9 4l2-5 2 5z" fill="#eee" /></g>],
  ["Camera", <g key="b"><polygon points="3,7 11,4 16,7 16,23 10,26 3,22" fill="url(#dark)" stroke="#333" strokeWidth="0.600" /><polygon points="10,9 16,7 16,23 10,26" fill="#4a4a4a" /><polygon points="16,9 25,7 26,20 16,22" fill="#8a8a8a" /><circle cx="21" cy="15" r="5" fill="#eee" stroke="#333" strokeWidth="1.400" /><circle cx="21" cy="15" r="2.200" fill="#ccc" stroke="#444" /></g>],
  ["Zoom to part", <g key="c"><circle cx="13" cy="13" r="9" fill="#eee" stroke="#555" strokeWidth="2.400" /><Cube x={13} y={6} s={5} h={7} top="#f06a64" left="#d8302a" right="#a81a15" /><path d="M20 20l6 6" stroke="#555" strokeWidth="3" /></g>],
  ["Zoom window", <g key="d"><path d="M2 2v16h16V2z" fill="none" stroke="#e3403a" strokeWidth="1.600" />{Lens}</g>],
  ["Zoom lasso", <g key="e"><path d="M2 2q0 14 4 15t5-8 10-4" fill="none" stroke="#e3403a" strokeWidth="1.600" />{Lens}</g>],
  ["Fit", <g key="f"><polygon points="7,5 14,8 14,21 7,18" fill="#777" /><polygon points="14,8 21,4 21,18 14,21" fill="#ec3a2c" /><path d="M3 19v5h5M25 19v5h-5" fill="none" stroke="#444" strokeWidth="1.500" /></g>],
  ["Explode", <g key="g"><Cube x={6} y={4} s={4} h={4} left="#555" /><Cube x={14} y={1} s={4} h={4} left="#555" /><Cube x={21} y={11} s={6} h={8} /><path d="M18 13v8M24 13v8M15 18l6 3 6-3" stroke="#333" fill="none" strokeWidth="0.700" /></g>],
  ["Show", <g key="h"><path d="M1 14Q12 0 27 12q-6 13-15 11Q5 21 1 14z" fill="#a8a8a8" /><path d="M1 14Q12 3 27 12" fill="none" stroke="#333" strokeWidth="2" /><path d="M4 14q9 9 21-1-10-9-21 1z" fill="#eee" /><circle cx="15" cy="13" r="5" fill="#333" /><circle cx="13" cy="11" r="1.500" fill="#fff" /></g>],
  ["Section", <g key="i"><path d="M8 6q8-4 16 2l2 8-8 8-9-1-3-3z" fill="url(#gray)" stroke="#444" /><ellipse cx="13" cy="14" rx="2" ry="5" fill="#eee" stroke="#333" /><ellipse cx="19" cy="13" rx="2" ry="5" fill="#eee" stroke="#333" /><path d="M3 20l8 4" stroke="#e3312a" strokeWidth="3.500" /></g>],
  ["Add plane", <g key="j"><polygon points="10,14 27,9 22,22 14,25" fill="#bbb" stroke="#555" /><polygon points="3,9 10,13 22,4 27,8 16,19 3,12" fill="#e8362e" stroke="#8d1410" strokeWidth="0.600" /><path d="M6 17h3v3h3v3h-3v3H6v-3H3v-3h3z" fill="#fff" stroke="#333" /></g>],
];

const NoSign = <g stroke="#d32a24" fill="#fff" strokeWidth="1.600"><circle cx="18" cy="19" r="4" /><path d="M15 16l6 6" /></g>;

const listItems = [
  ["Create Sets"], ["Node", 1, 1], ["Shell Element", 1], ["Surface", 1], ["Solid Element", 1], ["RBE", 1],
  ["Membrane Layer", 1], ["Degrees of Freedom (ASET)", 1], ["From Groups/Mesh controls", 1], ["Create Set Pairs"], ["Transfer Sets"],
];

function SetsDialog() {
  return (
    <div role="dialog" aria-label="Sets" className="absolute left-[21px] top-[26px] w-[552px] border border-[#b3b3b3] bg-[#f5f5f5] pb-5 shadow-[3px_3px_4px_rgba(0,0,0,0.5)]">
      <header className="flex h-[41px] items-center pb-[7px] pl-1.5 pr-[7px]">
        <h2 className="w-[44px] text-[15px]">Sets</h2>
        <div className="mr-2.5 h-3 grow bg-[radial-gradient(circle,#8a8a8a_1.200px,transparent_1.600px)] bg-size-[6px_6px]" />
        <button type="button" aria-label="Help" className="mr-1">
          <svg className="h-3 w-3" viewBox="0 0 12 12"><circle cx="6" cy="6" r="5" fill="none" stroke="#333" /><path d="M4.500 5Q4.500 3.500 6 3.500T7.500 5Q7.500 6 6 6.500V7.500M6 8v1" fill="none" stroke="#333" /></svg>
        </button>
        <button type="button" aria-label="Close"><X className="h-3.5 w-3.5" strokeWidth={1.8} /></button>
      </header>
      <div className="flex gap-[5px] pl-[18px] pr-[18px]">
        <ul className="h-[518px] w-[216px] border border-[#bcbcbc] bg-[#efefef] px-[3px] pt-px text-[#555]">
          {listItems.map(([t, sub, sel]) => (
            <li key={t} className={`flex h-[22px] items-center ${sel ? "" : sub ? "pl-[15px]" : "pl-[3px]"}`}>
              <button type="button" className={`text-left ${sel ? "h-4 w-full bg-[#d8f1fb] pl-[15px] leading-4" : ""}`}>{t}</button>
            </li>
          ))}
        </ul>
        <form className="flex grow flex-col" onSubmit={(e) => e.preventDefault()}>
          <div className="flex h-[22px] items-center">
            <label htmlFor="set-name" className="w-[45px]">Name</label>
            <input id="set-name" defaultValue="N_RECOVERY" className="h-[22px] min-w-0 grow border border-[#bcbcbc] bg-white px-[3px] outline-none" />
            <button type="button" aria-label="Choose a name" className="-ml-px flex h-[22px] w-4 items-center justify-center border border-[#bcbcbc] text-[#777]">
              <Chevron small />
            </button>
          </div>
          <div className="mt-[5px] flex h-5 items-center">
            <label htmlFor="set-id" className="w-[45px]">ID</label>
            <input id="set-id" defaultValue="1" className="h-5 min-w-0 grow border border-[#bcbcbc] bg-white px-[3px] text-[#444] outline-none" />
          </div>
          <fieldset className="mt-4">
            <legend className="h-[21px] leading-5">Input Entity:</legend>
            {["Node", "Element", "Vertex", "Edge", "Face", "Body"].map((t, i) => (
              <label key={t} className="flex h-[25px] items-center gap-1.5 pl-[25px] text-[#979797]">
                <input
                  type="radio" name="entity" disabled defaultChecked={i === 0}
                  className="h-[13px] w-[13px] appearance-none rounded-full border border-[#a9b1bd] checked:border-[4px]"
                />
                {t}
              </label>
            ))}
          </fieldset>
          <div className="mt-[3px] flex h-5 items-center gap-1.5 pl-[52px]">
            <label htmlFor="body-name" className="grow whitespace-nowrap">Body name</label>
            <input id="body-name" disabled className="h-5 w-[167px] shrink-0 border border-[#bcbcbc]" />
          </div>
          <div className="mb-[3px] mt-[15px]">
            {["Include mid nodes", "Use only surface nodes", "Nearest node to co-ordinate"].map((t, i) => (
              <label key={t} className="relative flex h-[26px] items-center gap-1.5 text-[#979797]">
                <input type="checkbox" disabled defaultChecked={i === 0} className="h-[13px] w-[13px] appearance-none border border-[#a9b1bd] checked:bg-[#a9b1bd]" />
                {i === 0 && (
                  <svg className="pointer-events-none absolute left-0 h-[13px] w-[13px]" viewBox="0 0 13 13" aria-hidden="true">
                    <path d="M3 6l3 3 4-5" fill="none" stroke="#fff" strokeWidth="1.500" />
                  </svg>
                )}
                {t}
              </label>
            ))}
          </div>
          {["X", "Y", "Z"].map((t) => (
            <div key={t} className="mb-[5px] flex h-5 items-center pl-[25px]">
              <label htmlFor={`coord-${t}`} className="w-3.5">{t}</label>
              <input id={`coord-${t}`} disabled defaultValue="0 mm" className="h-5 min-w-0 grow border border-[#bcbcbc] px-1 text-right text-[#979797]" />
            </div>
          ))}
        </form>
      </div>
      <div className="mt-[31px] flex justify-end gap-1 pr-[17px]">
        {["Apply", "OK", "Cancel"].map((t, i) => (
          <button key={t} type="button" disabled={i === 0} className="h-[26px] w-[95px] rounded-sm border border-[#bcbcbc] disabled:text-[#979797]">
            <span className="underline underline-offset-2">{t[0]}</span>{t.slice(1)}
          </button>
        ))}
      </div>
    </div>
  );
}

function EntityPanel() {
  return (
    <div className="h-[157px] shrink-0 pl-[10px]">
      <div className="flex h-[45px]">
        <button type="button" aria-label="Close entity list" className="mt-2 h-3.5 w-3.5"><X className="h-3.5 w-3.5" strokeWidth={1.5} /></button>
        <div className="mt-3 flex h-7 items-center">
          <button type="button" aria-label="Collapse" className="ml-2.5">
            <svg className="h-3 w-3" viewBox="0 0 12 12"><path d="M2 6l4-4 4 4M2 11l4-4 4 4" fill="none" stroke="#333" strokeWidth="1.200" /></svg>
          </button>
          <button type="button" aria-label="Remove linked faces" className="ml-3.5">
            <svg className="h-6 w-6" viewBox="0 0 24 24"><path d="M2 13Q6 4 11 1l11 3-7 14z" fill="url(#red)" stroke="#8d1410" strokeWidth="0.600" /><path d="M8 4l3-3 11 3-10 7z" fill="#bbb" /><path d="M1 16l10 6" stroke="#d32a24" strokeWidth="1.500" /><circle cx="21" cy="12" r="2" fill="#d32a24" />{NoSign}</svg>
          </button>
          <button type="button" aria-label="Remove face" className="ml-[7px]">
            <svg className="h-6 w-6" viewBox="0 0 24 24"><path d="M2 13Q6 4 11 1l11 3-7 14z" fill="url(#red)" stroke="#8d1410" strokeWidth="0.600" /><path d="M1 16l10 6" stroke="#d32a24" strokeWidth="1.500" />{NoSign}</svg>
          </button>
          <button type="button" aria-label="Remove edge" className="ml-2">
            <svg className="h-6 w-6" viewBox="0 0 24 24"><path d="M3 2q9 2 17 6L3 22z" fill="#c4c4c4" stroke="#e0443e" strokeWidth="1.200" /><circle cx="20" cy="8" r="2" fill="#d32a24" />{NoSign}</svg>
          </button>
          <button type="button" aria-label="Back" className="ml-[7px]"><ArrowLeft className="h-6 w-6 text-[#444]" strokeWidth={1.6} /></button>
          <span className="ml-1.5">{"{231}"}</span>
        </div>
      </div>
      <div className="ml-[18px] flex h-[112px] border border-[#b8b8b8] bg-white">
        <table className="grow table-fixed border-collapse self-start text-left">
          <colgroup><col className="w-[124px]" /><col /></colgroup>
          <thead>
            <tr className="h-[21px] border-b border-[#cfcfcf] bg-[#f5f5f5]">
              <th className="border-r border-[#d4d4d4] p-0 pl-[5px] font-normal">Model Name</th>
              <th className="p-0 pl-[5px] font-normal">Entity ID</th>
            </tr>
          </thead>
          <tbody>
            {[601, 596, 595, 592].map((n, i) => (
              <tr key={n} className={`h-[22px] border-b border-[#d4d4d4] ${i === 0 ? "bg-[#f1fbff]" : ""}`}>
                <td className="border-r border-[#d4d4d4] p-0 pl-[3px] leading-4">OPTISTRUCT_T...</td>
                <td className="p-0 pl-[3px] leading-4">Node {n}</td>
              </tr>
            ))}
          </tbody>
        </table>
        <div className="flex w-[13px] shrink-0 flex-col border-l border-[#cfcfcf] bg-[#f3f3f3]">
          <button type="button" aria-label="Scroll up" className="flex h-3 items-center justify-center bg-[#dadada]"><Chevron small className="rotate-180" /></button>
          <div className="h-3 bg-[#dadada]" />
          <div className="grow" />
          <button type="button" aria-label="Scroll down" className="flex h-3 items-center justify-center bg-[#dadada]"><Chevron small /></button>
        </div>
      </div>
    </div>
  );
}

const menu = ["File", "View", "Solutions", "Sketch", "Geometry", "Mesh", "Analysis", "Results", "Electronics", "Advanced", "Inspect", "Automation"];

export default function App() {
  return (
    <div className="flex min-h-screen flex-col overflow-hidden bg-[#f5f5f5] font-['Liberation_Sans',Arial,sans-serif] text-[13px] leading-4 text-[#1b1b1b]">
      <Defs />
      <header className="flex h-[29px] shrink-0 items-center bg-[#f2f2f2] pl-[3px]">
        <svg className="h-[18px] w-[18px]" viewBox="0 0 18 18" aria-hidden="true">
          <path d="M9 2v8M9 10l-6 5M9 10l6 5" fill="none" stroke="#f9684a" strokeWidth="3.600" strokeLinecap="round" strokeLinejoin="round" />
        </svg>
        <h1 className="grow whitespace-pre pl-2 font-['Open_Sans',sans-serif] text-[14px] text-[#8c8c8c]">{"Altair SimLab 2025  - Student Edition"}</h1>
        <div className="flex items-center gap-[43px] pr-[23px] text-[#8c8c8c]">
          <button type="button" aria-label="Minimize"><Minus className="h-4 w-4" strokeWidth={1.3} /></button>
          <button type="button" aria-label="Restore">
            <svg className="h-3.5 w-3.5" viewBox="0 0 14 14"><rect x="1" y="3.500" width="9" height="9" rx="1.500" fill="none" stroke="currentColor" /><path d="M4 1.500h6q2.500 0 2.500 2.500v6" fill="none" stroke="currentColor" /></svg>
          </button>
          <button type="button" aria-label="Close window"><X className="h-[18px] w-[18px]" strokeWidth={1.5} /></button>
        </div>
      </header>
      <nav className="-ml-px flex h-7 shrink-0 items-stretch gap-0.5">
        {menu.map((m) => (
          <button key={m} type="button" className={`border-b-2 px-2 pb-0.5 pt-0.5 ${m === "Analysis" ? "border-[#007aa3]" : "border-transparent"}`}>{m}</button>
        ))}
        <button type="button" aria-label="Add tab">
          <svg className="h-3 w-3" viewBox="0 0 12 12"><path d="M4.500 1h3v3.500H11v3H7.500V11h-3V7.500H1v-3h3.500z" fill="none" stroke="#c4c4c4" /></svg>
        </button>
        <div className="flex grow items-center justify-end gap-1.5 pr-[22px] text-[#333]">
          <button type="button" aria-label="Search" className="mr-0.5"><Search className="h-3.5 w-3.5" strokeWidth={3} /></button>
          <button type="button" aria-label="Help">
            <svg className="h-3.5 w-3.5" viewBox="0 0 14 14"><circle cx="7" cy="7" r="6" fill="none" stroke="#333" /><path d="M5 5.500Q5 4 7 4t2 1.500Q9 6.500 7 7.500V8.500M7 9.500v1" fill="none" stroke="#333" strokeWidth="1.200" /></svg>
          </button>
          <button type="button" aria-label="About" className="-mr-px">
            <svg className="h-4 w-4" viewBox="0 0 16 16"><circle cx="8" cy="8" r="7.300" fill="none" stroke="#333" /><path d="M6.500 7H8v5M6 12h4M8 4v1.500" fill="none" stroke="#333" strokeWidth="1.200" /></svg>
          </button>
          <button type="button" aria-label="Documentation">
            <svg className="h-4 w-4" viewBox="0 0 16 16"><path d="M1.500 3Q5 1 8 3.500 11 1 14.500 3v10Q11 11 8 13.500 5 11 1.500 13zM8 3.500v10" fill="none" stroke="#333" strokeWidth="1.300" /></svg>
          </button>
        </div>
      </nav>
      <Ribbon />
      <main className="flex grow">
        <Sidebar />
        <section className="relative flex min-w-0 grow flex-col">
          <div className="relative grow overflow-hidden">
            <Rail />
            <Model />
          </div>
          <div className="ml-9 border-t border-[#e4e4e4]" />
          <div className="flex h-[66px] shrink-0 items-start gap-px pl-[11px] pt-[34px]">
            {navIcons.map(([label, ic]) => (
              <button key={label} type="button" aria-label={label} className="h-7 w-7">
                <svg className="h-7 w-7 overflow-visible" viewBox="0 0 28 28">{ic}</svg>
              </button>
            ))}
          </div>
          <EntityPanel />
          <SetsDialog />
          <div className="absolute right-[44px] top-[31px] flex h-[50px] w-[129px] items-center rounded-lg border border-[#b8b8b8] bg-[#f3f3f3] shadow-[0_14px_30px_rgba(0,0,0,0.22)]">
            <div className="flex h-full w-[30px] items-center justify-center border-r border-[#e2e2e2]">
              <span className="h-5 w-1 rounded-full bg-[#858585]" />
            </div>
            <button type="button" aria-label="Dictate" className="ml-4"><Mic className="h-5 w-5 text-[#333]" strokeWidth={1.5} /></button>
            <button type="button" aria-label="More options" className="ml-[27px]">
              <svg className="h-4 w-4" viewBox="0 0 16 16"><g fill="#222"><circle cx="3" cy="8" r="1.400" /><circle cx="8" cy="8" r="1.400" /><circle cx="13" cy="8" r="1.400" /></g></svg>
            </button>
          </div>
        </section>
      </main>
      <footer className="flex h-[30px] shrink-0 items-center justify-end">
        <span className="mr-[91px]">Selection filter : Node</span>
        <span className="mr-[87px]">Count : 231</span>
        <span className="mr-[26px]">MMKS (mm kg N C s)</span>
        <label className="flex items-center gap-[7px] text-[#979797]">
          Units
          <span className="relative flex">
            <input type="checkbox" role="switch" disabled defaultChecked className="h-4 w-[30px] appearance-none rounded-full bg-[#a9b1bd]" />
            <span className="pointer-events-none absolute right-0.5 top-0.5 h-3 w-3 rounded-full bg-[#f5f5f5]" />
          </span>
        </label>
        <button type="button" aria-label="Swap" className="ml-4">
          <svg className="block h-4 w-4" viewBox="0 0 16 16"><path d="M0 6h15L9 1M16 10H2l6 5" fill="none" stroke="#333" strokeWidth="2" /></svg>
        </button>
      </footer>
    </div>
  );
}
